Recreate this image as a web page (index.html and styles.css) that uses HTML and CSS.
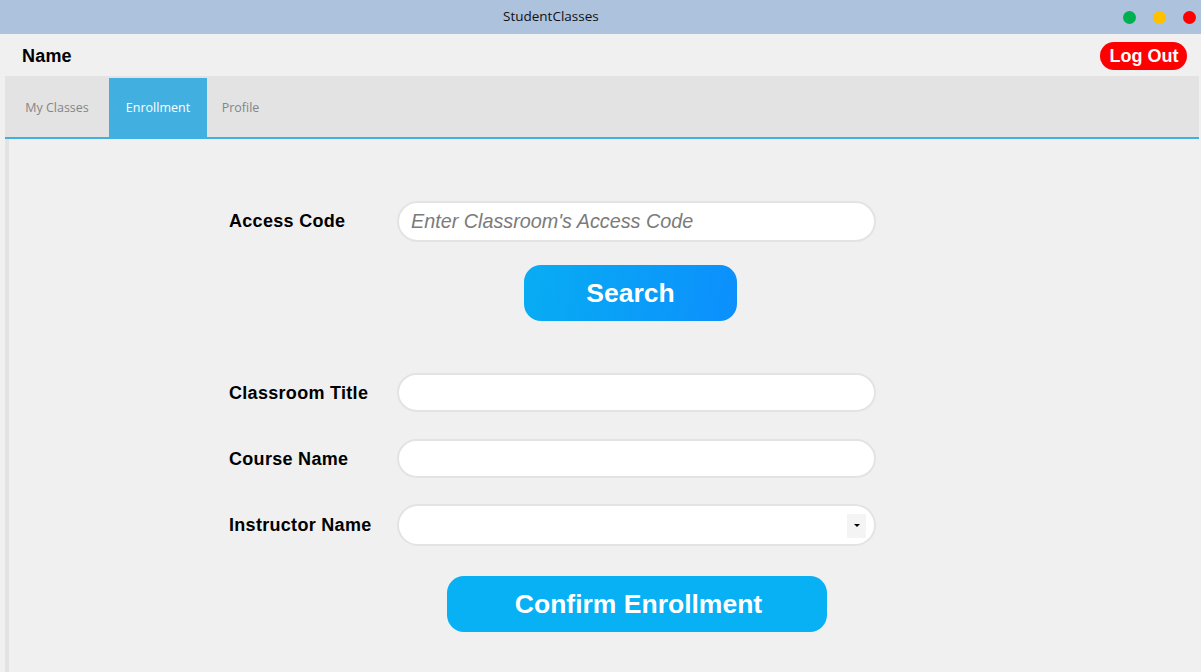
FILE: index.html
```html
<!DOCTYPE html>
<html>
<head>
<meta charset="utf-8">
<link rel="stylesheet" href="styles.css">
</head>
<body>
<div class="window">
  <div class="titlebar">
    <span class="title">StudentClasses</span>
    <div class="dots">
      <span class="dot green"></span>
      <span class="dot yellow"></span>
      <span class="dot red"></span>
    </div>
  </div>
  <div class="header">
    <span class="name">Name</span>
    <button class="logout">Log Out</button>
  </div>
  <div class="panel">
    <div class="tabbar">
      <div class="tab">My Classes</div>
      <div class="tab active">Enrollment</div>
      <div class="tab">Profile</div>
    </div>
    <div class="content">
      <div class="form">
        <div class="row first">
          <label class="label">Access Code</label>
          <div class="field"><span class="placeholder">Enter Classroom's Access Code</span></div>
        </div>
        <button class="search">Search</button>
        <div class="row r-title">
          <label class="label">Classroom Title</label>
          <div class="field short"></div>
        </div>
        <div class="row r-course">
          <label class="label">Course Name</label>
          <div class="field short"></div>
        </div>
        <div class="row r-instr">
          <label class="label">Instructor Name</label>
          <div class="field tall"><span class="arrow"><svg width="6" height="4" viewBox="0 0 6 4"><path d="M0 0h6L3 3z" fill="#000"/></svg></span></div>
        </div>
        <button class="confirm">Confirm Enrollment</button>
      </div>
    </div>
  </div>
</div>
</body>
</html>
```

FILE: styles.css
```css
* { box-sizing: border-box; }
html, body { margin: 0; padding: 0; }
body {
  width: 1201px;
  height: 672px;
  overflow: hidden;
  background: #f0f0f0;
  font-family: "Liberation Sans", Arial, sans-serif;
}
.window { display: flex; flex-direction: column; height: 672px; }
.titlebar {
  height: 34px;
  background: #adc2dc;
  display: flex;
  align-items: center;
}
.title {
  margin-left: 503px;
  font-family: "Open Sans", "Noto Sans", sans-serif;
  font-size: 13.5px;
  color: #111;
  margin-top: -3px;
}
.dots { margin-left: auto; margin-right: 5px; display: flex; gap: 17px; margin-top: 1px; }
.dot { width: 13px; height: 13px; border-radius: 50%; display: block; }
.green { background: #00b050; }
.yellow { background: #ffc000; }
.red { background: #ff0000; }

.header {
  height: 42px;
  display: flex;
  align-items: center;
  padding: 0 14px 0 22px;
}
.name { font-weight: bold; font-size: 18px; color: #000; margin-top: 2px; letter-spacing: 0.2px; }
.logout {
  margin-left: auto;
  height: 28px;
  width: 87px;
  border: none;
  border-radius: 14px;
  background: #ff0000;
  color: #fff;
  font-family: "Liberation Sans", Arial, sans-serif;
  font-weight: bold;
  font-size: 18px;
  padding: 2px 0 0 1px;
  margin-top: 1px;
}

.panel {
  flex: 1;
  margin-left: 5px;
  margin-right: 2px;
  display: flex;
  flex-direction: column;
}
.tabbar {
  height: 63px;
  background: #e3e3e3;
  display: flex;
  padding-top: 2px;
  border-bottom: 2px solid #41b0e1;
}
.tab {
  height: 59px;
  display: flex;
  align-items: center;
  justify-content: center;
  font-family: "Open Sans", "Noto Sans", sans-serif;
  font-size: 12.5px;
  color: #858585;
}
.tab:nth-child(1) { width: 104px; }
.tab:nth-child(2) { width: 98px; }
.tab:nth-child(3) { width: 67px; }
.tab.active { background: #41b0e1; color: #fff; }

.content {
  flex: 1;
  border-left: 4px solid #e3e3e3;
  background: #f0f0f0;
}
.form {
  display: flex;
  flex-direction: column;
  padding-left: 220px;
  padding-top: 62px;
}
.row { display: flex; align-items: center; }
.label {
  width: 168px;
  font-weight: bold;
  font-size: 18px;
  letter-spacing: 0.3px;
  color: #000;
  margin-top: 1px;
}
.row.first .label { margin-top: 0; }
.field {
  width: 479px;
  height: 41px;
  background: #fff;
  border: 2px solid #e3e3e3;
  border-radius: 21px;
  display: flex;
  align-items: center;
  padding-left: 12px;
}
.field.short { height: 39px; border-radius: 20px; }
.field.tall { height: 42px; justify-content: flex-end; padding-right: 8px; }
.placeholder {
  font-style: italic;
  font-size: 19.8px;
  color: #7b7b7b;
}
.arrow {
  width: 19px;
  height: 24px;
  background: #f4f4f4;
  display: flex;
  align-items: center;
  justify-content: center;
  margin-top: 2px;
}
.search {
  margin-top: 23px;
  margin-left: 295px;
  width: 213px;
  height: 56px;
  border: none;
  border-radius: 17px;
  background: linear-gradient(100deg, #08adf3 0%, #0c8ffd 100%);
  color: #fff;
  font-family: "Liberation Sans", Arial, sans-serif;
  font-weight: bold;
  font-size: 26.5px;
  padding: 0;
}
.r-title { margin-top: 52px; }
.r-course { margin-top: 27px; }
.r-instr { margin-top: 26px; }
.confirm {
  margin-top: 30px;
  margin-left: 218px;
  width: 380px;
  height: 56px;
  border: none;
  border-radius: 17px;
  background: #08b0f4;
  color: #fff;
  font-family: "Liberation Sans", Arial, sans-serif;
  font-weight: bold;
  font-size: 26.5px;
  padding: 0 0 0 3px;
}
```
